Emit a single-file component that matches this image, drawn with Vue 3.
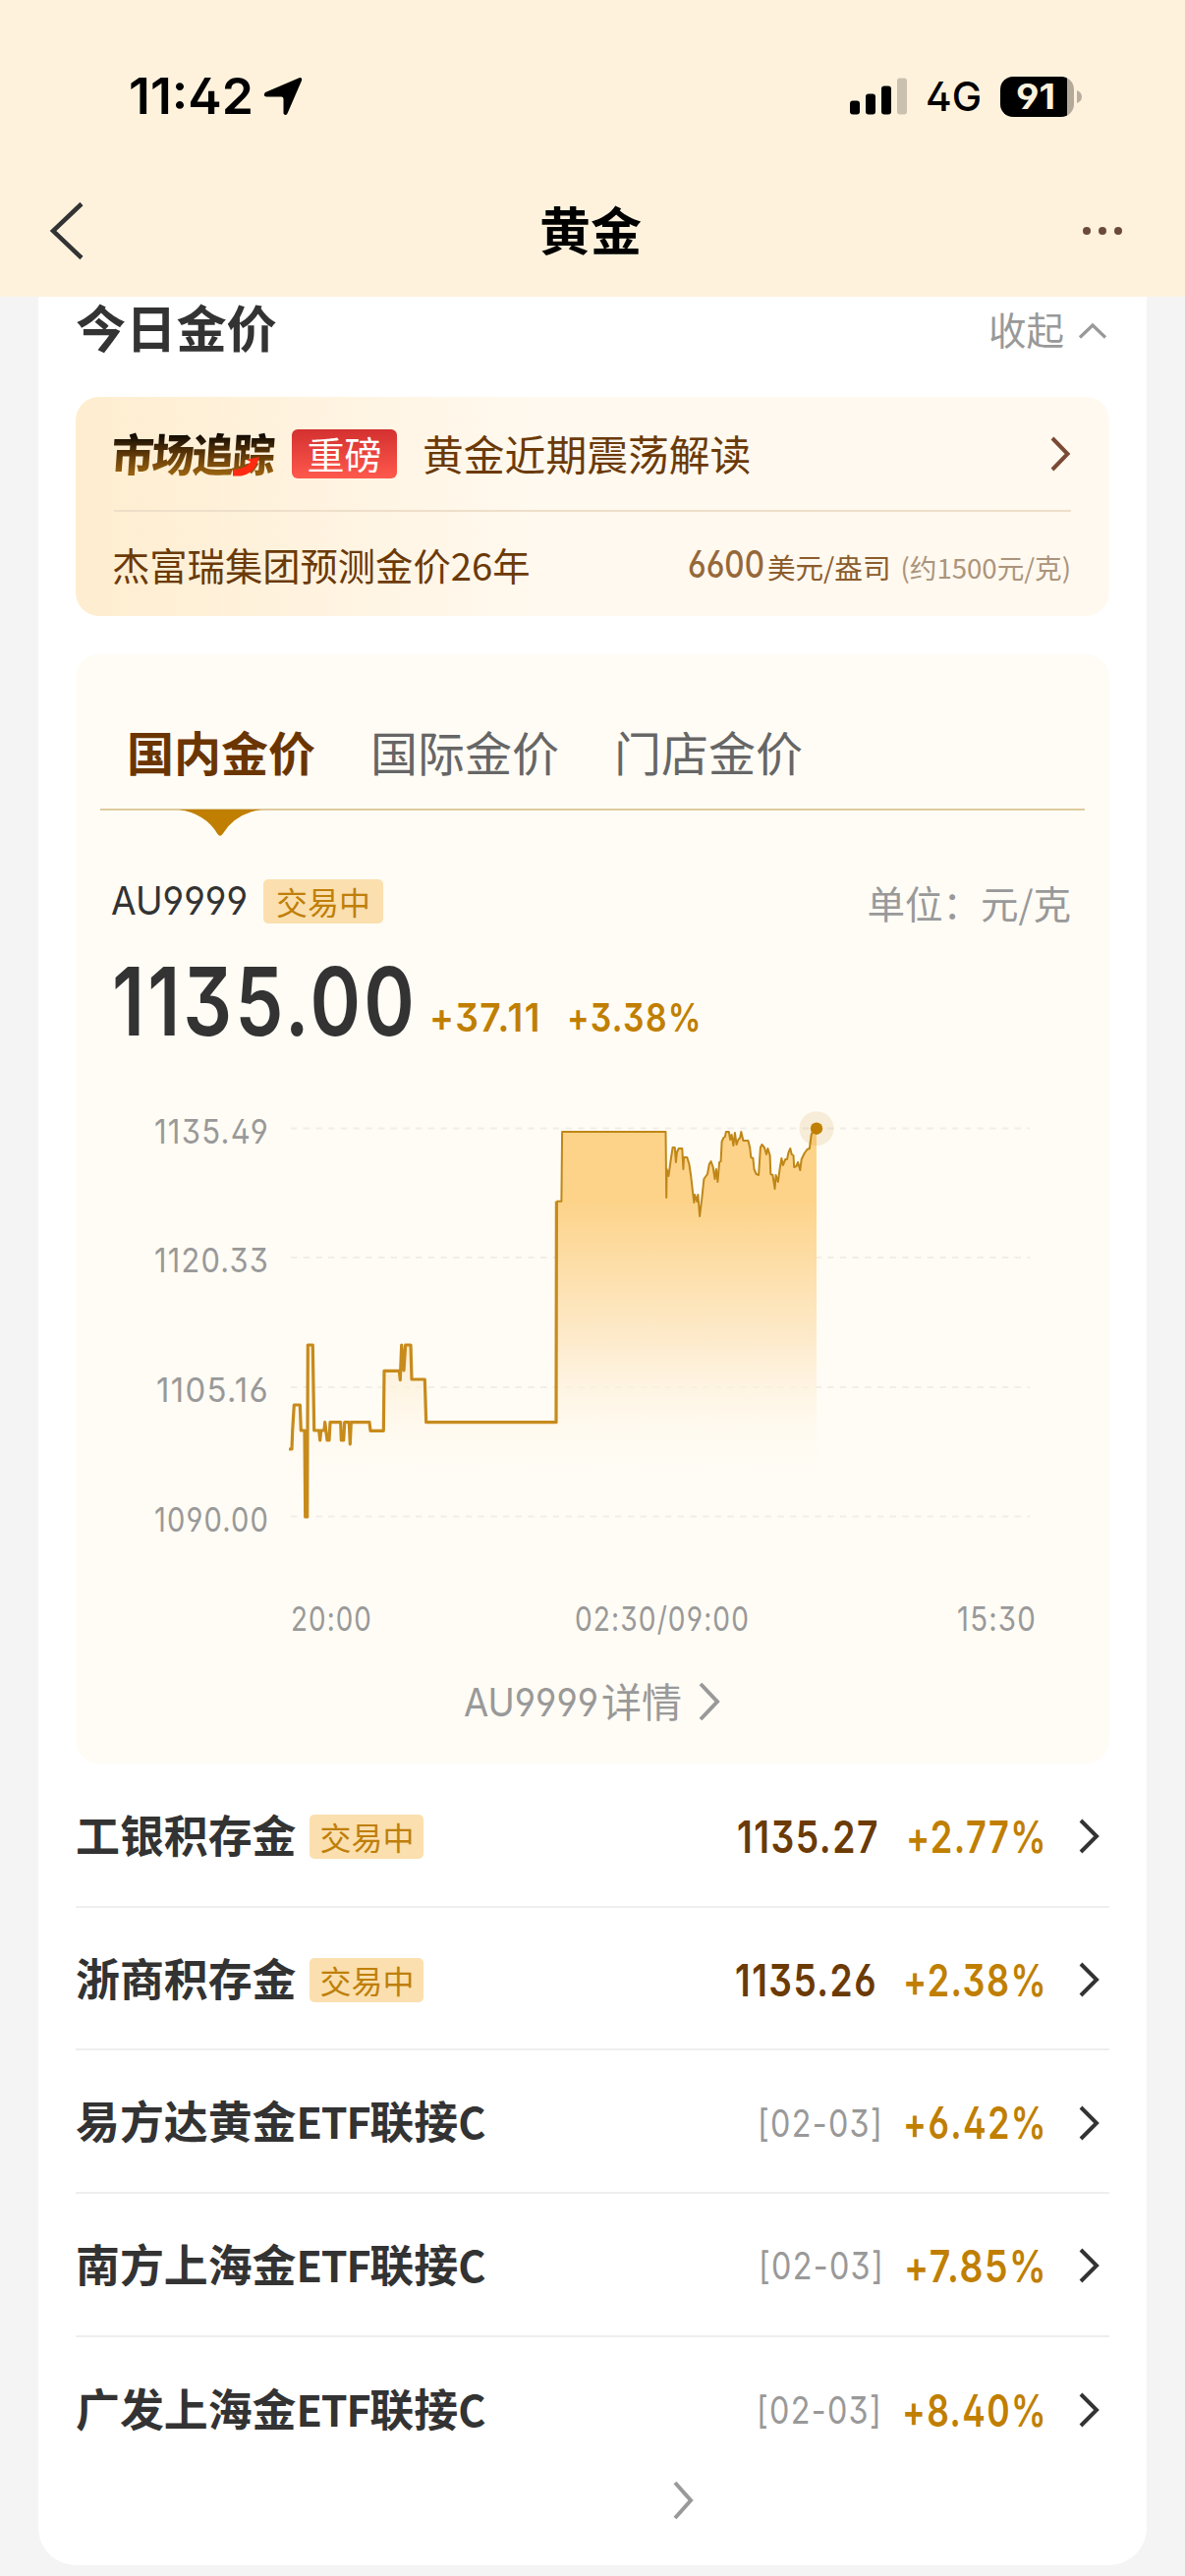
<script setup>
import { h } from 'vue'

// condensed number: squeezes the glyphs into a fixed width, caps centred vertically
const Num = (props) => {
  const size = Number(props.size)
  const height = Math.round(size * 1.1)
  return h('svg', { width: props.w, height, class: 'num', style: { fontSize: size + 'px' } }, [
    h('text', {
      x: 0,
      y: height / 2 + size * 0.364,
      textLength: props.w,
      lengthAdjust: 'spacingAndGlyphs',
      fill: 'currentColor'
    }, props.t)
  ])
}
Num.props = ['t', 'w', 'size']

const tabs = ['国内金价', '国际金价', '门店金价']

const yLabels = [
  { text: '1135.49', y: 1164, x: 157, grid: 1148.5 },
  { text: '1120.33', y: 1295, x: 157, grid: 1280 },
  { text: '1105.16', y: 1427, x: 159, grid: 1412 },
  { text: '1090.00', y: 1558.5, x: 157, grid: 1543.5 }
]
const xLabels = [
  { text: '20:00', x: 296, w: 83 },
  { text: '02:30/09:00', x: 585, w: 178 },
  { text: '15:30', x: 974, w: 81 }
]

const night = '294,1475 297,1475 297.7,1456.3 299.3,1430 305.3,1430 306.3,1456 310,1456 310.7,1544 312.7,1544 313.3,1369 318.3,1369 319.7,1456 324.7,1456 325.7,1466 326.7,1456 330,1456 330.7,1447.7 333,1466 335,1466 336,1447.7 346.7,1447.7 347.3,1466 349.7,1466 350.7,1447.7 355.3,1447.7 356.3,1470 357.3,1447.7 376,1447.7 377,1456.3 390.3,1456.3 391,1395.3 406.3,1395.3 407.3,1404.7 408.7,1369 411,1395 412.7,1369 418,1369 419,1404 432.3,1404 433.7,1447.7 566,1447.7 566.4,1222.7'
const day = '566.4,1222.7 571.4,1222.7 572.1,1152 677.5,1152 678.2,1219 678.6,1190 680.4,1197 681.4,1190 682.9,1179 684.6,1168 686.8,1168 687.9,1183 688.9,1173 690.7,1169 694.3,1169 695.4,1190 696,1178 699.3,1178 701.4,1185 703.2,1197 705,1213 706.4,1224 707.1,1216 709.3,1223 710.4,1216 712.1,1238 714.3,1220 716.4,1200 720,1195 721.8,1185 723.6,1182 725.7,1188 727.5,1200 728.9,1190 730.4,1203 732.1,1183 733.6,1182 734.6,1162 736.4,1158 737.9,1157 738.9,1152 741.8,1152 743.2,1160 744.6,1155 746.4,1166 747.9,1153 749.6,1165 751.4,1160 753.2,1158 754.3,1152 756.4,1161 761.4,1161 763.2,1168 764.3,1178 766.4,1179 767.5,1190 769.6,1195 772.1,1196 773.9,1168 775.4,1165 777.9,1168 780,1175 781.4,1169 783.6,1176 784.3,1195 786.4,1196 788.6,1210 789.6,1196 791.8,1203 793.6,1190 795.4,1179 796.8,1186 799.3,1180 801,1180 802.5,1173 804.3,1169 805.7,1175 807.5,1176 808.2,1188 810.4,1187 812.1,1183 814.3,1191 815.7,1180 818.6,1174 821.4,1170 823.9,1169 825.7,1155 827.9,1150 831,1148.7'
const area = `294,1543 ${night} ${day} 831,1543`

const products = [
  { name: '工银积存金', open: true, price: '1135.27', pw: 145, rate: '+2.77%', rw: 144, gap: 27 },
  { name: '浙商积存金', open: true, price: '1135.26', pw: 145, rate: '+2.38%', rw: 147, gap: 26 },
  { name: '易方达黄金ETF联接C', date: '[02-03]', rate: '+6.42%', rw: 147, gap: 20 },
  { name: '南方上海金ETF联接C', date: '[02-03]', rate: '+7.85%', rw: 146, gap: 20 },
  { name: '广发上海金ETF联接C', date: '[02-03]', rate: '+8.40%', rw: 148, gap: 20 }
]

// latin runs of a fund name are set a little smaller than the chinese ones
const nameParts = (name) => name.split(/([A-Z]+)/).filter(Boolean)
const isLatin = (s) => /^[A-Z]/.test(s)
</script>

<template>
  <div class="page">
    <header class="header">
      <div class="status">
        <Num class="time" t="11:42" w="127" size="50.5" />
        <svg class="locate" width="40" height="40" viewBox="0 0 40 40">
          <path d="M36.5 1.2Q40 .5 39 4L24.5 37.500Q22.500 40.500 20.500 37.500V22.500Q20.300 20.600 18.500 20.500H3Q-1 19.500 2 16Z" />
        </svg>
        <svg class="signal" width="58" height="38" viewBox="0 0 58 38">
          <rect x="0" y="23.500" width="10" height="14" rx="3" />
          <rect x="16" y="16.500" width="10" height="21" rx="3" />
          <rect x="32" y="8.500" width="10" height="29" rx="3" />
          <rect x="48" y=".5" width="10" height="37" rx="3" fill="#cbc1b1" />
        </svg>
        <Num class="net" t="4G" w="57" size="41.500" />
        <div class="battery">
          <div class="cell"><Num class="level" t="91" w="40" size="35" /></div>
          <svg width="5" height="13" viewBox="0 0 5 13"><path d="M0 0Q5 2 5 6.500T0 13Z" fill="#b9ae9f" /></svg>
        </div>
      </div>
      <nav class="nav">
        <svg class="back" width="36" height="60" viewBox="0 0 36 60"><path d="M34 2.500L5 30L34 57.500" /></svg>
        <h1>黄金</h1>
        <svg class="more" width="44" height="12" viewBox="0 0 44 12">
          <circle cx="6" cy="6" r="4" /><circle cx="22" cy="6" r="4" /><circle cx="38" cy="6" r="4" />
        </svg>
      </nav>
    </header>

    <main class="card">
      <div class="section-head">
        <h2>今日金价</h2>
        <span class="fold">收起</span>
        <svg width="30" height="18" viewBox="0 0 30 18"><path d="M2 15.500L15 3L28 15.500" fill="none" stroke="#999" stroke-width="3.200" /></svg>
      </div>

      <section class="banner">
        <div class="banner-top">
          <div class="logo">
            <span>市场追踪</span>
            <svg class="swoosh" width="29" height="20" viewBox="0 0 29 20"><path d="M15 3L28 0Q24 17 9 19.500H1V13Q13 13 19 5Z" fill="#ff2a12" /></svg>
          </div>
          <span class="hot">重磅</span>
          <span class="news">黄金近期震荡解读</span>
          <svg class="arrow" width="22" height="38" viewBox="0 0 22 38"><path d="M3 3L18.500 19L3 35" /></svg>
        </div>
        <div class="banner-bottom">
          <span class="forecast">杰富瑞集团预测金价26年</span>
          <Num class="ounce" t="6600" w="78" size="37.500" />
          <span class="unit-oz">美元/盎司</span>
          <span class="approx">(约1500元/克)</span>
        </div>
      </section>

      <section class="quote">
        <div class="tabs">
          <span v-for="(tab, i) in tabs" :key="tab" class="tab" :class="{ active: i === 0 }">
            {{ tab }}
            <svg v-if="i === 0" class="pointer" width="84" height="27" viewBox="0 0 84 27">
              <path d="M0 0H84Q57 4 44.500 25Q42 28.500 39.500 25Q27 4 0 0Z" fill="#c07f00" />
            </svg>
          </span>
        </div>
        <div class="symbol">
          <Num class="code" t="AU9999" w="139" size="40" />
          <span class="tag wide">交易中</span>
          <span class="unit">单位：元/克</span>
        </div>
        <div class="price">
          <Num class="last din" t="1135.00" w="311" size="96" />
          <Num class="delta din" t="+37.11" w="114" size="40" />
          <Num class="delta pct din" t="+3.38%" w="138" size="40" />
        </div>
        <svg class="chart" width="1052" height="580" viewBox="77 1100 1052 580">
          <defs>
            <linearGradient id="gold" gradientUnits="userSpaceOnUse" x1="0" y1="1222" x2="0" y2="1512">
              <stop offset="0" stop-color="#fdd389" />
              <stop offset=".5" stop-color="#fdebcd" />
              <stop offset="1" stop-color="#fffcf5" stop-opacity="0" />
            </linearGradient>
          </defs>
          <g v-for="l in yLabels" :key="l.text">
            <line x1="296" x2="1048" :y1="l.grid" :y2="l.grid" class="grid" />
            <text :x="l.x" :y="l.y" :textLength="274 - l.x" lengthAdjust="spacingAndGlyphs">{{ l.text }}</text>
          </g>
          <polygon :points="area" fill="url(#gold)" />
          <polyline :points="night" class="line" />
          <polyline :points="day" class="line thin" />
          <circle cx="831" cy="1148.700" r="17.500" fill="#c07f00" fill-opacity=".12" />
          <circle cx="831" cy="1148.700" r="6.200" fill="#c07f00" />
          <text v-for="l in xLabels" :key="l.text" :x="l.x" y="1660" :textLength="l.w" lengthAdjust="spacingAndGlyphs">{{ l.text }}</text>
        </svg>
        <div class="detail">
          <Num class="detail-code" t="AU9999" w="137" size="40" />
          <span>详情</span>
          <svg width="24" height="42" viewBox="0 0 24 42"><path d="M3 3L20 21L3 39" /></svg>
        </div>
      </section>

      <ul class="list">
        <li v-for="p in products" :key="p.name">
          <span class="name"><span v-for="s in nameParts(p.name)" :key="s" :class="{ latin: isLatin(s) }">{{ s }}</span></span>
          <span v-if="p.open" class="tag">交易中</span>
          <span class="space"></span>
          <Num v-if="p.price" class="value din" :t="p.price" :w="p.pw" size="44.500" />
          <Num v-else class="date din" :t="p.date" w="128" size="38.500" />
          <Num class="rate din" :t="p.rate" :w="p.rw" size="44.500" :style="{ marginLeft: p.gap + 'px' }" />
          <svg class="go" width="24" height="38" viewBox="0 0 24 38"><path d="M3 3L19 19L3 35" /></svg>
        </li>
      </ul>
      <div class="more-row">
        <svg width="24" height="42" viewBox="0 0 24 42"><path d="M3 3L19 21L3 39" /></svg>
      </div>
    </main>
  </div>
</template>

<style>
body {
  margin: 0;
  background: #f4f4f4;
}
</style>

<style scoped>
.page {
  width: 1206px;
  height: 2622px;
  overflow: hidden;
  background: #f4f4f4;
  color: #333;
  font-family: "Noto Sans CJK SC", "Noto Sans", sans-serif;
  white-space: nowrap;
}
.page * {
  box-sizing: border-box;
}
svg {
  display: block;
  flex: none;
}
.num {
  overflow: visible;
  font-family: Inter, Roboto, sans-serif;
  font-feature-settings: "cv03", "cv04", "ss01";
}
.din {
  letter-spacing: 0.04em;
}
.header {
  height: 302px;
  background: #fef2dd;
  color: #000;
}
.status {
  height: 168px;
  padding: 28px 105px 0 131px;
  display: flex;
  align-items: center;
}
.time {
  font-weight: 600;
}
.locate {
  margin-left: 10px;
}
.signal {
  margin-left: auto;
}
.net {
  margin-left: 19px;
  font-weight: 500;
}
.battery {
  margin-left: 19px;
  display: flex;
  align-items: center;
  gap: 3px;
}
.cell {
  width: 75px;
  height: 41px;
  border-radius: 13px;
  display: flex;
  align-items: center;
  padding-left: 16px;
  background: linear-gradient(90deg, #000 68px, #b4aa9b 68px);
}
.level {
  font-weight: 700;
  color: #fef2dd;
}
.nav {
  height: 134px;
  padding: 0 62px 0 49px;
  display: flex;
  align-items: center;
  justify-content: space-between;
}
.back path {
  fill: none;
  stroke: #333;
  stroke-width: 4.5;
}
.nav h1 {
  margin: 0 0 4px 17px;
  font-size: 52px;
  line-height: 60px;
  font-weight: 700;
}
.more {
  fill: #6b4a3c;
}
.card {
  width: 1128px;
  height: 2309px;
  margin: 0 auto;
  padding: 0 38px;
  background: #fff;
  border-radius: 0 0 38px 38px;
}
.section-head {
  height: 102px;
  padding-bottom: 40px;
  display: flex;
  align-items: center;
}
.section-head h2 {
  margin: -3px auto 0 0;
  font-size: 51.2px;
  line-height: 60px;
  font-weight: 700;
}
.fold {
  margin: 2px 14px 0 0;
  font-size: 38.5px;
  line-height: 50px;
  color: #999;
}
.section-head svg {
  margin: 8px 2px 0 0;
}
.banner {
  height: 223px;
  padding: 0 39px 0 37px;
  border-radius: 24px;
  background: linear-gradient(90deg, #feedcf 0%, #fff3df 22%, #fff9ef 45%, #fff9f0 100%);
  color: #6b3a08;
}
.banner-top {
  height: 117px;
  margin-left: 2px;
  border-bottom: 2px solid #eedfca;
  display: flex;
  align-items: center;
}
.logo {
  position: relative;
  width: 165px;
}
.logo span {
  display: block;
  margin: -3px 0 0 -2px;
  font-size: 43px;
  line-height: 54px;
  font-weight: 900;
  letter-spacing: -2px;
  transform: skewX(-4deg) scaleY(1.06);
  background: linear-gradient(#120b04 20%, #5a3508 52%, #96600f 88%);
  -webkit-background-clip: text;
  background-clip: text;
  color: transparent;
}
.swoosh {
  position: absolute;
  left: 120px;
  top: 29px;
}
.hot {
  margin-left: 16px;
  width: 107px;
  height: 50px;
  border-radius: 6px;
  background: linear-gradient(#d33030, #ff594d);
  color: #fff;
  font-size: 38px;
  line-height: 47px;
  text-align: center;
}
.news {
  margin: -2px 0 0 26px;
  font-size: 41.8px;
  line-height: 50px;
}
.arrow {
  margin-left: auto;
}
.arrow path {
  fill: none;
  stroke: #7a4a35;
  stroke-width: 4;
}
.banner-bottom {
  height: 106px;
  display: flex;
  align-items: center;
}
.forecast {
  margin-right: auto;
  font-size: 38.3px;
}
.ounce {
  color: #96683a;
  font-weight: 500;
}
.unit-oz {
  margin: 5px 10px 0 3px;
  font-size: 28.6px;
  color: #8c5c2c;
}
.approx {
  margin-top: 5px;
  font-size: 27.6px;
  color: #ab947c;
}
.quote {
  margin-top: 39px;
  height: 1129px;
  border-radius: 24px;
  background: #fffcf5;
}
.tabs {
  height: 159px;
  margin: 0 25px;
  padding: 40px 28px 0 27px;
  border-bottom: 2px solid #dfcb9f;
  display: flex;
  gap: 56px;
}
.tab {
  position: relative;
  width: 192px;
  height: 119px;
  font-size: 48px;
  line-height: 117px;
  color: #666;
}
.tab.active {
  font-weight: 700;
  color: #6b3500;
}
.pointer {
  position: absolute;
  left: 53px;
  top: 118px;
}
.symbol {
  height: 118px;
  padding: 67px 39px 0 36px;
  display: flex;
  align-items: center;
}
.code {
  margin-top: -3px;
}
.tag {
  width: 116px;
  height: 45px;
  margin-left: 14px;
  border-radius: 5px;
  background: #fbdfae;
  color: #bf7f0a;
  font-size: 32px;
  line-height: 45px;
  text-align: center;
}
.tag.wide {
  width: 122px;
  margin-left: 16px;
}
.unit {
  margin-left: auto;
  font-size: 38.5px;
  line-height: 50px;
  color: #999;
}
.price {
  height: 157px;
  padding: 11px 0 17px 37px;
  display: flex;
  align-items: center;
}
.last {
  font-weight: 600;
}
.delta {
  margin: 33px 0 0 12px;
  font-weight: 600;
  color: #c07f00;
}
.pct {
  margin-left: 26px;
}
.chart {
  font-family: Inter, Roboto, sans-serif;
  font-feature-settings: "cv03", "cv04", "ss01";
  font-size: 34px;
  letter-spacing: 0.04em;
  fill: #999;
}
.grid {
  stroke: #f1eee8;
  stroke-width: 2;
  stroke-dasharray: 6.4 6.3;
}
.line {
  fill: none;
  stroke: #c78b1c;
  stroke-width: 3.2;
  stroke-linejoin: round;
}
.line.thin {
  stroke: #bf8718;
  stroke-width: 2;
}
.detail {
  height: 104px;
  display: flex;
  align-items: center;
  justify-content: center;
  font-size: 41px;
  line-height: 54px;
  color: #999;
}
.detail span {
  margin: -4px 0 0 3px;
}
.detail svg:last-child {
  margin-left: 16px;
}
.detail path,
.more-row path {
  fill: none;
  stroke: #999;
  stroke-width: 4;
}
.list {
  margin: 0;
  padding: 1px 0 0;
  list-style: none;
}
.list li {
  height: 145.7px;
  padding: 3px 8px 0 0;
  border-bottom: 2px solid #eee;
  display: flex;
  align-items: center;
}
.list li:last-child {
  border-bottom: 0;
}
.name {
  margin-top: -5px;
  font-size: 44.9px;
  line-height: 56px;
  font-weight: 700;
}
.name .latin {
  font-size: 43px;
  letter-spacing: -1.2px;
}
.space {
  flex: 1;
}
.value {
  color: #6b3a05;
  font-weight: 600;
}
.date {
  color: #999;
}
.rate {
  color: #c07f00;
  font-weight: 600;
}
.go {
  margin-left: 31px;
}
.go path {
  fill: none;
  stroke: #333;
  stroke-width: 4;
}
.more-row {
  padding-left: 607px;
}
</style>
